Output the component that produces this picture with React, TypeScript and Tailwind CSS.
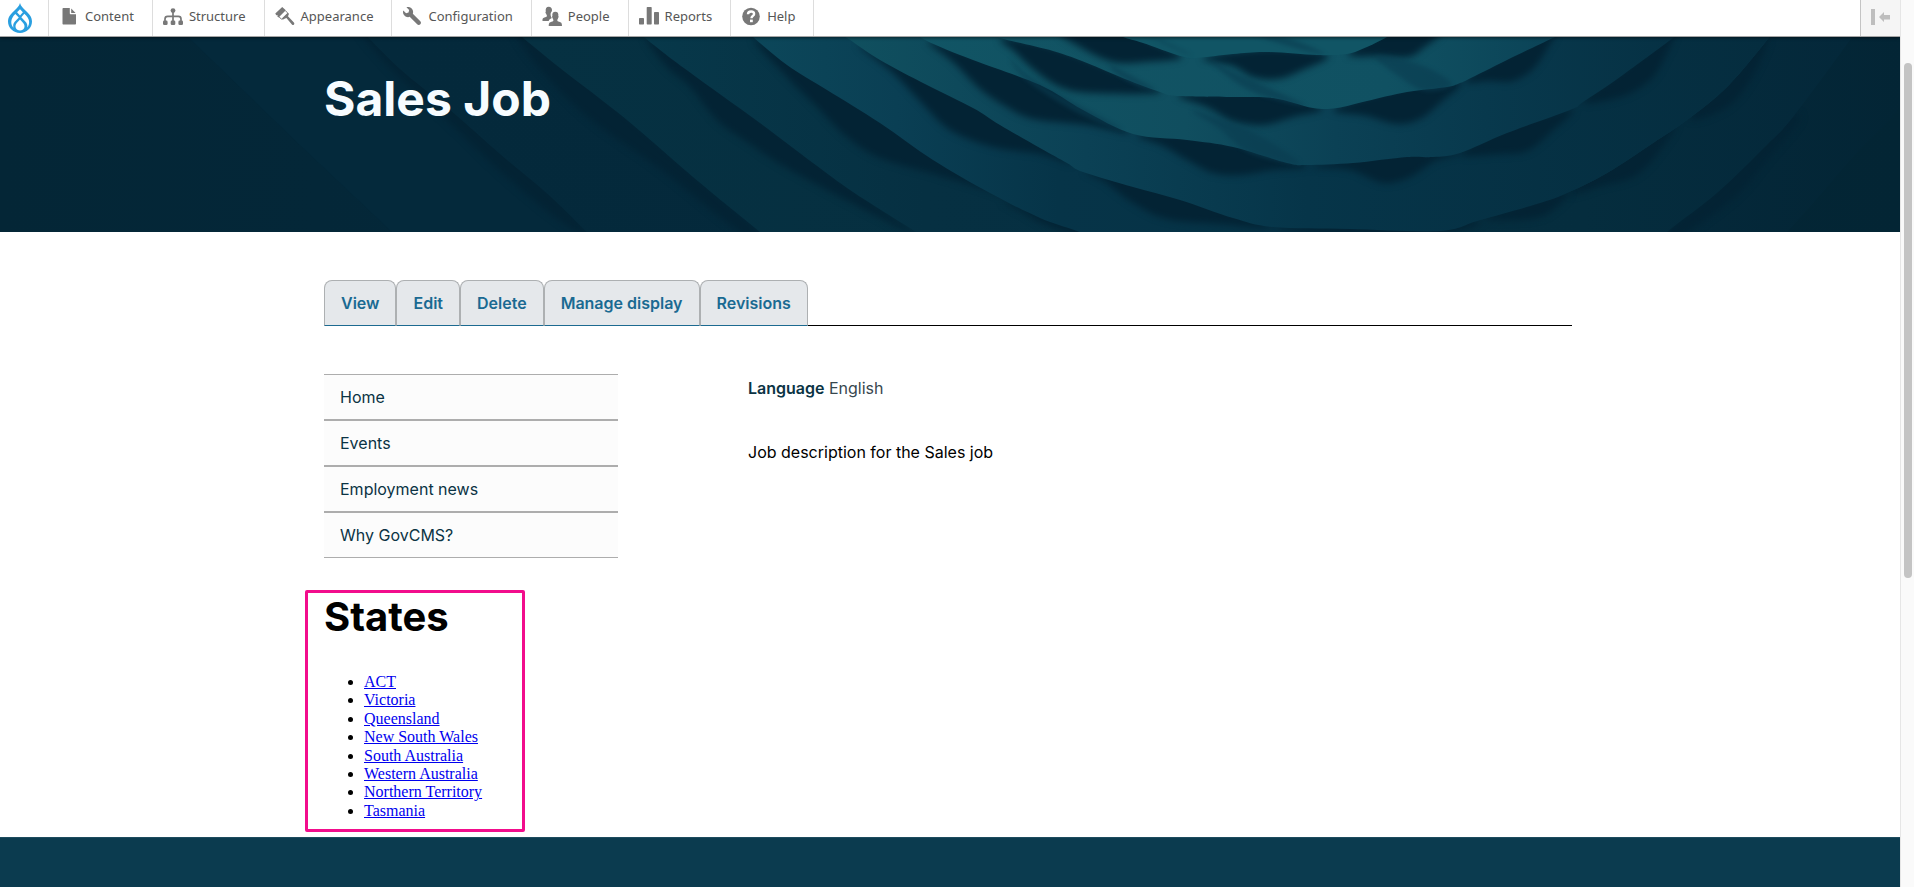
import type { ReactNode } from "react";

const iconClass = "h-5 w-5 shrink-0 fill-[#787878]";

function ContentIcon() {
  return (
    <svg viewBox="0 0 20 20" className={iconClass} aria-hidden="true">
      <path d="M4.5 2h6.3v5.2c0 .6.4 1 1 1h5.2v9.3c0 .6-.4 1-1 1H4.5c-.6 0-1-.4-1-1V3c0-.6.4-1 1-1z" />
      <path d="M12.2 2.4l4.4 4.5h-4.4z" />
    </svg>
  );
}

function StructureIcon() {
  return (
    <svg viewBox="0 0 20 20" className={iconClass} aria-hidden="true">
      <path
        d="M10 4v13M2 17v-4c0-1.700 1-2.600 2.600-2.600h10.800c1.600 0 2.600.9 2.600 2.600v4"
        fill="none"
        stroke="#787878"
        strokeWidth="1.700"
      />
      <circle cx="10" cy="4.600" r="2.400" />
      <rect x="0" y="14.600" width="4.600" height="4.400" rx="1.300" />
      <rect x="7.700" y="14.600" width="4.600" height="4.400" rx="1.300" />
      <rect x="15.400" y="14.600" width="4.600" height="4.400" rx="1.300" />
    </svg>
  );
}

function AppearanceIcon() {
  return (
    <svg viewBox="0 0 20 20" className={iconClass} aria-hidden="true">
      <path d="M.3 7.600L7.200.9l3.600 3.400-7.200 7.100-1.400-1.200.500-1.200-1.500.300z" />
      <path
        d="M10.300 4.600l2.100 2.100c.6.600.6 1.100 0 1.700l-4.700 4.400c-.6.500-1 .5-1.600 0L4 10.800"
        fill="none"
        stroke="#787878"
        strokeWidth="1"
      />
      <path d="M6.800 12.400l6-5.600 1.100 1.300-.9 2.200 5.900 6.300c.7.800.5 1.800-.1 2.200-.6.400-1.300.2-1.900-.4L11.400 12l-1.900.7-1.300.9z" />
    </svg>
  );
}

function ConfigurationIcon() {
  return (
    <svg viewBox="0 0 16 16" className="mx-px mt-px h-[18px] w-[18px] shrink-0 fill-[#787878]" aria-hidden="true">
      <path d="M15.400 12.600l-6.650-6.679c.15-.449.252-.921.252-1.421C9.002 2.015 6.986 0 4.500 0c-.505 0-.981.102-1.434.255l2.431 2.431-.588 2.196-2.196.588L.268 3.025C.106 3.489 0 3.981 0 4.500 0 6.986 2.014 9 4.500 9c.5 0 .972-.102 1.421-.251l6.667 6.665c.781.781 2.047.781 2.812.014.781-.781.781-2.047 0-2.828z" />
    </svg>
  );
}

function PeopleIcon() {
  return (
    <svg viewBox="0 0 20 20" className={iconClass} aria-hidden="true">
      <path d="M6.800.8c2 0 3.200 1.300 3.200 3.300 0 .5-.1 1-.3 1.500C8.700 6.500 8.400 8 8.700 9.600c.2 1.100.6 1.900 1.100 2.500-.9.700-2.600 1-3.100 2.900H.5c-.3-2.600.7-3.300 2.600-3.700 1.400-.3 1.800-.5 1.800-1.500 0-.8-.6-1-.9-2.300-.5-.1-.8-1.600-.2-1.800C3.200 2.800 4.400.8 6.800.8z" />
      <path d="M13.300 5.800c2.300 0 3.500 1.500 3 4.300.5.200.4 1.500-.2 1.800-.2 1.200-.8 1.500-.8 2.400 0 1 .5 1.200 1.900 1.500 1.800.4 2.800 1.100 2.800 4.200H6.700c0-3.100 1-3.800 2.800-4.200 1.400-.3 1.900-.5 1.900-1.500 0-.9-.6-1.200-.8-2.400-.6-.3-.7-1.600-.2-1.800-.5-2.800.7-4.300 2.900-4.300z" />
    </svg>
  );
}

function ReportsIcon() {
  return (
    <svg viewBox="0 0 20 20" className={iconClass} aria-hidden="true">
      <rect x="0" y="12" width="5" height="6.500" rx=".7" />
      <rect x="7.700" y="1" width="5" height="17.500" rx=".7" />
      <rect x="15" y="6" width="5" height="12.500" rx=".7" />
    </svg>
  );
}

function HelpIcon() {
  return (
    <svg viewBox="0 0 20 20" className={iconClass} aria-hidden="true">
      <circle cx="10" cy="10.500" r="8.800" />
      <path
        d="M7 8.300c0-1.800 1.300-2.800 3.100-2.800s3 1 3 2.400c0 2-2.600 2.100-2.600 4.300"
        fill="none"
        stroke="#fff"
        strokeWidth="2.400"
      />
      <rect x="9" y="13.600" width="2.800" height="2.600" fill="#fff" />
    </svg>
  );
}

function DrupalLogo() {
  return (
    <svg viewBox="0 0 24 30" className="h-[30px] w-6" aria-hidden="true">
      <path
        fill="#2a9fe0"
        d="M12 0c.8 3.300 3 4.900 5.500 7.400C21 10.800 24 13.500 24 18.600 24 25 18.600 30 12 30S0 25 0 18.600c0-5.100 3-7.800 6.500-11.200C9 4.900 11.200 3.300 12 0z"
      />
      <g fill="#fff">
        <path d="M12 6.200l2.900 3-2.900 3.400-2.900-3.400z" />
        <path d="M7.300 10.900l3.500 3.500-4.100 4.300c-1.600 1.700-1.900 4.100-1.100 6C2.300 21.300 2.300 15.700 7.300 10.900z" />
        <path d="M16.300 10.800c5.400 4.600 6.200 9.700 3 13.700.3-2.700-.2-4.200-2-6.100l-4-4.200z" />
        <path d="M12 16.600l3.200 3.500c2.700 3 1 7.500-3.200 7.500s-5.900-4.500-3.200-7.500z" />
      </g>
    </svg>
  );
}

const adminItems: { label: string; icon: ReactNode }[] = [
  { label: "Content", icon: <ContentIcon /> },
  { label: "Structure", icon: <StructureIcon /> },
  { label: "Appearance", icon: <AppearanceIcon /> },
  { label: "Configuration", icon: <ConfigurationIcon /> },
  { label: "People", icon: <PeopleIcon /> },
  { label: "Reports", icon: <ReportsIcon /> },
  { label: "Help", icon: <HelpIcon /> },
];

function AdminToolbar() {
  return (
    <nav
      aria-label="Administration"
      className="relative flex h-[37px] items-stretch border-b border-[#a5a5a5] bg-white font-['Noto_Sans',sans-serif] text-[13px] text-[#565656] shadow-[0_1px_3px_rgba(0,0,0,0.5)]"
    >
      <a href="#home" aria-label="Drupal" className="flex w-[49px] items-start border-r border-[#dddddd] pt-[3px] pl-2">
        <DrupalLogo />
      </a>
      {adminItems.map((item) => (
        <a key={item.label} href="#admin" className="flex items-start gap-1 border-r border-[#dddddd] pt-[6px] pr-[18px] pl-[10px]">
          {item.icon}
          <span className="pl-[2px] leading-5">{item.label}</span>
        </a>
      ))}
      <button
        type="button"
        aria-label="Vertical orientation"
        className="ml-auto flex w-10 items-start border-l border-[#c4c4c4] bg-[#f5f5f5] pt-2 pl-[10px]"
      >
        <svg viewBox="0 0 19 17" className="h-[17px] w-[19px] fill-[#bebebe]" aria-hidden="true">
          <rect x="0" y="1" width="4" height="16" />
          <path d="M8 9l5-5v3h6v4.500h-6V14z" />
        </svg>
      </button>
    </nav>
  );
}

type Point = [number, number];

/** Catmull-Rom spline through "x,y x,y ..." points, as an SVG path. */
function spline(source: string, closed = false): string {
  const pts = source.split(" ").map((p) => p.split(",").map(Number) as Point);
  const n = pts.length;
  const at = (i: number): Point => (closed ? pts[(i + n) % n] : pts[Math.max(0, Math.min(n - 1, i))]);
  let d = `M${pts[0][0]} ${pts[0][1]}`;
  for (let i = 0; i < (closed ? n : n - 1); i++) {
    const [a, b, c, e] = [at(i - 1), at(i), at(i + 1), at(i + 2)];
    d += `C${b[0] + (c[0] - a[0]) / 6} ${b[1] + (c[1] - a[1]) / 6} ${c[0] - (e[0] - b[0]) / 6} ${c[1] - (e[1] - b[1]) / 6} ${c[0]} ${c[1]}`;
  }
  return `${d}Z`;
}

const outerRight = "1440,194 1480,183 1540,166 1567,156 1607,136 1653,106 1687,83 1727,50 1767,3 1772,-8";

const layers: { shadows: string[]; edge: string; fill: string }[] = [
  {
    shadows: ["360,-5 395,36 449,85 500,134 555,180 590,200 551,155 449,62 372,-5"],
    edge: "360,-8 400,32 449,72 500,117 551,160 592,200 640,245 680,280 1680,280 1730,245 1785,197 1853,120 1905,60 1905,-8",
    fill: "url(#hero-band-0)",
  },
  {
    shadows: [
      "515,-5 540,32 590,82 660,132 740,195 765,200 627,79 530,-5",
      "1680,200 1735,160 1765,125 1800,82 1780,85 1717,150 1667,195",
    ],
    edge: "512,-8 522,0 560,31 627,83 693,140 760,195 810,236 850,270 1580,270 1620,236 1667,195 1717,156 1767,108 1793,80 1850,3 1856,-8",
    fill: "url(#hero-band-1)",
  },
  {
    shadows: [
      "646,0 665,28 690,50 717,83 747,105 785,130 850,165 915,197 853,150 760,80 673,15",
      "1690,80 1727,70 1752,40 1768,0 1740,20",
      "1570,155 1605,148 1633,140 1655,120 1676,86 1640,100",
    ],
    edge: `635,-8 645,1 673,23 710,50 760,86 813,126 853,155 913,193 960,222 1010,250 1340,250 1390,210 ${outerRight}`,
    fill: "url(#hero-band-2)",
  },
  {
    shadows: [
      "755,2 787,40 817,70 847,100 880,121 937,138 995,156 1040,178 1000,155 933,115 827,45",
      "1003,164 1022,175 1042,186 1075,198 1085,192 1040,175",
    ],
    edge: `744,-8 753,0 787,28 827,53 880,86 933,123 990,156 1040,181 1077,194 1120,210 1160,222 1350,222 1400,204 ${outerRight}`,
    fill: "url(#hero-band-3)",
  },
  {
    shadows: [
      "858,8 893,36 920,64 950,93 993,110 1040,117 1072,127 1040,104 980,68 900,28",
      "1086,134 1105,145 1133,166 1167,182 1220,187 1273,191 1233,175 1180,156 1133,142",
      "1275,190 1350,200 1440,197 1480,184 1400,185",
      "1484,181 1510,183 1545,178 1569,154 1520,168",
    ],
    edge: `830,-8 847,1 880,23 927,48 973,71 1000,88 1040,111 1067,126 1083,135 1133,150 1180,163 1233,181 1273,190 1350,192 ${outerRight}`,
    fill: "url(#hero-band-4)",
  },
  {
    shadows: [
      "928,4 953,25 980,52 1005,69 1033,82 1087,88 1130,96 1083,68 1040,42 973,18",
      "1137,98 1163,109 1187,123 1213,136 1240,138 1273,133 1307,129 1260,113 1190,98",
      "1312,129 1350,133 1383,146 1410,140 1435,124 1460,116 1400,115",
      "1460,117 1500,117 1527,114 1550,96 1572,72 1507,90",
      "1583,64 1620,60 1648,45 1663,24 1673,-5 1630,28",
    ],
    edge: "912,-8 927,4 973,23 1040,48 1083,73 1133,97 1187,103 1233,110 1287,126 1307,128 1353,126 1407,120 1433,120 1460,116 1507,96 1570,73 1583,65 1620,40 1673,1 1684,-8",
    fill: "url(#hero-band-5)",
  },
  {
    shadows: [
      "1001,1 1015,15 1033,32 1060,50 1093,56 1160,55 1125,38 1053,10",
      "1178,59 1207,70 1233,84 1263,88 1293,80 1322,71 1273,56 1200,56",
      "1334,72 1367,79 1397,87 1420,82 1440,66 1460,45 1407,50",
      "1465,44 1490,44 1513,44 1533,32 1548,10 1553,-4 1507,18",
    ],
    edge: "980,-8 1000,1 1053,14 1087,26 1125,42 1160,55 1177,59 1233,60 1273,61 1313,71 1337,71 1367,64 1407,55 1447,50 1460,46 1467,43 1507,23 1553,1 1572,-8",
    fill: "url(#hero-band-6)",
  },
  {
    shadows: [
      "1062,-6 1080,10 1113,25 1145,25 1182,20 1150,4 1130,-8",
      "1203,21 1233,29 1253,40 1277,42 1300,34 1328,18 1267,12",
      "1348,17 1380,19 1408,20 1422,12 1440,-6 1390,-6",
    ],
    edge: "1108,-8 1123,0 1143,6 1180,19 1197,21 1233,17 1267,15 1317,18 1347,17 1367,10 1387,0 1400,-8",
    fill: "#115565",
  },
];

const streaks = [
  "1010,22 1030,40 1075,66 1122,92 1095,84 1060,66 1025,42",
  "1110,28 1130,38 1156,53 1140,50 1118,38",
  "1210,24 1240,38 1305,68 1270,61 1240,48",
  "1192,74 1220,92 1250,116 1300,127 1262,100 1225,84",
  "1375,20 1400,40 1425,54 1452,48 1430,32 1400,22",
  "1146,-2 1165,5 1192,18 1178,13",
  "1256,-2 1290,2 1325,17 1295,11",
];

function HeroArtwork() {
  return (
    <svg
      viewBox="0 0 1900 195"
      preserveAspectRatio="none"
      className="absolute inset-0 h-full w-full"
      aria-hidden="true"
    >
      <defs>
        <filter id="hero-soft" x="-10%" y="-20%" width="120%" height="140%" colorInterpolationFilters="sRGB">
          <feGaussianBlur stdDeviation="3.5" />
        </filter>
        <filter id="hero-streak" x="-10%" y="-20%" width="120%" height="140%" colorInterpolationFilters="sRGB">
          <feGaussianBlur stdDeviation="2" />
        </filter>
        <linearGradient id="hero-base" gradientUnits="userSpaceOnUse" x1="0" y1="0" x2="1900" y2="0">
          <stop offset="0" stopColor="#042636" />
          <stop offset=".5" stopColor="#04293c" />
          <stop offset="1" stopColor="#032534" />
        </linearGradient>
        <linearGradient id="hero-band-0" gradientUnits="userSpaceOnUse" x1="367" y1="0" x2="1900" y2="0">
          <stop offset="0" stopColor="#04293b" />
          <stop offset=".8" stopColor="#052a3c" />
          <stop offset="1" stopColor="#032535" />
        </linearGradient>
        <linearGradient id="hero-band-1" gradientUnits="userSpaceOnUse" x1="522" y1="0" x2="1850" y2="0">
          <stop offset="0" stopColor="#063142" />
          <stop offset=".8" stopColor="#052d3e" />
          <stop offset="1" stopColor="#04283a" />
        </linearGradient>
        <linearGradient id="hero-band-2" gradientUnits="userSpaceOnUse" x1="643" y1="0" x2="1768" y2="0">
          <stop offset="0" stopColor="#07384a" />
          <stop offset=".25" stopColor="#063042" />
          <stop offset="1" stopColor="#052d3f" />
        </linearGradient>
        <linearGradient id="hero-band-3" gradientUnits="userSpaceOnUse" x1="753" y1="0" x2="1600" y2="0">
          <stop offset="0" stopColor="#0c475a" />
          <stop offset=".17" stopColor="#0a3f54" />
          <stop offset=".36" stopColor="#063448" />
          <stop offset="1" stopColor="#063042" />
        </linearGradient>
        <linearGradient id="hero-band-4" gradientUnits="userSpaceOnUse" x1="847" y1="0" x2="1768" y2="0">
          <stop offset="0" stopColor="#10505f" />
          <stop offset=".12" stopColor="#0e495b" />
          <stop offset=".26" stopColor="#0b4155" />
          <stop offset=".5" stopColor="#063549" />
          <stop offset="1" stopColor="#052d3f" />
        </linearGradient>
        <linearGradient id="hero-band-5" gradientUnits="userSpaceOnUse" x1="922" y1="0" x2="1674" y2="0">
          <stop offset="0" stopColor="#115565" />
          <stop offset=".35" stopColor="#104e5f" />
          <stop offset=".55" stopColor="#0b4155" />
          <stop offset=".75" stopColor="#08394d" />
          <stop offset="1" stopColor="#063144" />
        </linearGradient>
        <linearGradient id="hero-band-6" gradientUnits="userSpaceOnUse" x1="997" y1="0" x2="1554" y2="0">
          <stop offset="0" stopColor="#125464" />
          <stop offset=".7" stopColor="#105162" />
          <stop offset="1" stopColor="#0b4357" />
        </linearGradient>
      </defs>
      <rect width="1900" height="195" fill="url(#hero-base)" />
      <path d="M188 0L302 110L392 195H588L367 0Z" fill="#04293b" />
      {layers.map((layer) => (
        <g key={layer.edge}>
          <g fill="#032334" filter="url(#hero-soft)">
            {layer.shadows.map((points) => (
              <path key={points} d={spline(points, true)} />
            ))}
          </g>
          <path d={spline(layer.edge)} fill={layer.fill} />
        </g>
      ))}
      <g opacity=".6" fill="#0a3c50" filter="url(#hero-streak)">
        {streaks.map((points) => (
          <path key={points} d={spline(points, true)} />
        ))}
      </g>
    </svg>
  );
}

const tabs = ["View", "Edit", "Delete", "Manage display", "Revisions"];
const sections = ["Home", "Events", "Employment news", "Why GovCMS?"];
const states = [
  "ACT",
  "Victoria",
  "Queensland",
  "New South Wales",
  "South Australia",
  "Western Australia",
  "Northern Territory",
  "Tasmania",
];

export default function App() {
  return (
    <div className="flex min-h-screen bg-white font-['Inter',sans-serif] text-base text-black">
      <div className="flex min-w-0 flex-1 flex-col">
        <div className="relative z-10">
          <AdminToolbar />
        </div>

        <header className="relative h-[195px] overflow-hidden bg-[#042839] pr-1">
          <HeroArtwork />
          <div className="relative mx-auto max-w-[1248px] pt-8">
            <h1 className="text-5xl leading-[60px] font-bold text-[#f7fcff]">Sales Job</h1>
          </div>
        </header>

        <main className="flex-1 pr-1">
          <div className="mx-auto max-w-[1248px] pt-12">
            <nav aria-label="Tabs" className="flex items-end">
              {tabs.map((tab) => (
                <a
                  key={tab}
                  href="#tab"
                  className="rounded-t-lg border border-[#adb0b2] border-b-[#1c6a90] bg-[#e5e8eb] px-4 py-[10px] leading-6 font-semibold text-[#1a6a92]"
                >
                  {tab}
                </a>
              ))}
              <span className="flex-1 border-b border-black" />
            </nav>

            <div className="flex pt-12">
              <aside className="w-[294px] shrink-0">
                <nav aria-label="Section">
                  <ul>
                    {sections.map((label) => (
                      <li key={label} className="border-y border-[#adadad] bg-[#fcfcfc]">
                        <a href="#section" className="block px-4 py-[10px] leading-6 text-[#0b3344]">
                          {label}
                        </a>
                      </li>
                    ))}
                  </ul>
                </nav>

                <section className="mt-8 mb-[5px] -ml-[19px] w-[220px] rounded-xs border-3 border-[#f20d8c] px-4 pb-[9px]">
                  <h2 className="text-[40px] leading-[48px] font-bold">States</h2>
                  <ul className="list-disc pt-8 pl-10 font-['Liberation_Serif',serif] leading-[1.15]">
                    {states.map((state) => (
                      <li key={state}>
                        <a href="#state" className="text-[#0000ee] underline">
                          {state}
                        </a>
                      </li>
                    ))}
                  </ul>
                </section>
              </aside>

              <article className="ml-[130px] min-w-0 flex-1">
                <p className="leading-7 text-[#37474f]">
                  <strong className="font-semibold text-[#0b3344]">Language</strong> English
                </p>
                <p className="mt-9 leading-7">Job description for the Sales job</p>
              </article>
            </div>
          </div>
        </main>

        <footer className="h-[51px] border-t border-[#1d4c5e] bg-[#0b3b4f]" />
      </div>

      <div
        className="relative z-20 w-[14px] shrink-0 border-l border-[#e6e6e6] bg-[#fafafa] pt-[63px] pl-[3px]"
        aria-hidden="true"
      >
        <div className="h-[515px] w-2 rounded-full bg-[#c4c4c4]" />
      </div>
    </div>
  );
}
